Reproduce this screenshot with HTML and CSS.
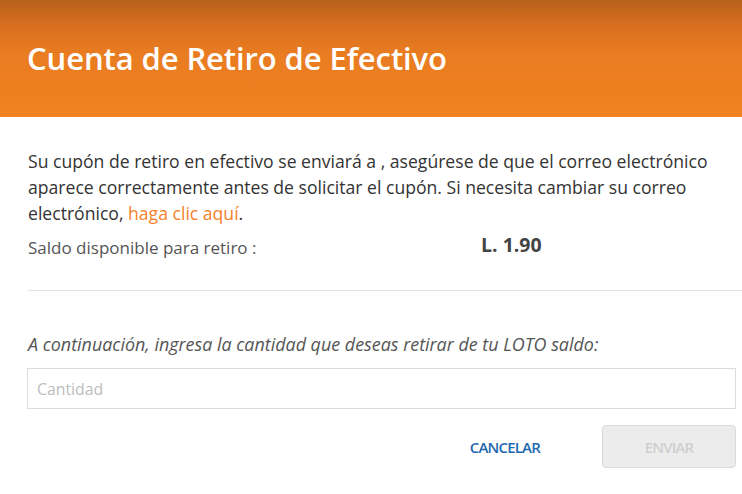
FILE: index.html
```html
<!DOCTYPE html>
<html lang="es">
<head>
<meta charset="utf-8">
<title>Cuenta de Retiro de Efectivo</title>
<link rel="stylesheet" href="styles.css">
</head>
<body>
<div class="modal">
  <header class="modal-header">
    <h1 class="modal-title">Cuenta de Retiro de Efectivo</h1>
  </header>
  <section class="modal-body">
    <p class="notice">Su cupón de retiro en efectivo se enviará a , asegúrese de que el correo electrónico aparece correctamente antes de solicitar el cupón. Si necesita cambiar su correo electrónico, <a class="link" href="#">haga clic aquí</a>.</p>
    <div class="balance-row">
      <span class="balance-label">Saldo disponible para retiro :</span>
      <span class="balance-value">L. 1.90</span>
    </div>
  </section>
  <hr class="divider">
  <section class="form">
    <p class="hint">A continuación, ingresa la cantidad que deseas retirar de tu LOTO saldo:</p>
    <input class="amount" type="text" placeholder="Cantidad">
    <div class="actions">
      <button class="btn-cancel" type="button">CANCELAR</button>
      <button class="btn-send" type="button" disabled>ENVIAR</button>
    </div>
  </section>
</div>
</body>
</html>
```
FILE: styles.css
```css
* { box-sizing: border-box; }
html, body { margin: 0; padding: 0; background: #fff; }
body { font-family: "Open Sans", "Noto Sans", sans-serif; color: #333; }

.modal { width: 742px; }

.modal-header {
  height: 117px;
  background: linear-gradient(180deg, #b6601b 0%, #d96f1f 22%, #e97c21 45%, #f28221 100%);
  display: flex;
  align-items: center;
  padding: 0 28px 0 27px;
}
.modal-title {
  margin: 0;
  margin-top: -1px;
  color: #fff;
  font-size: 31px;
  font-weight: 600;
  letter-spacing: -0.1px;
  line-height: 1;
}

.modal-body { padding: 31px 14px 0 28px; }
.notice {
  margin: 0;
  font-size: 17.6px;
  line-height: 26px;
  color: #333;
}
.link { color: #f5822a; text-decoration: none; }

.balance-row {
  display: flex;
  align-items: center;
  margin-top: 9px;
  height: 26px;
}
.balance-label {
  width: 453px;
  font-size: 17px;
  color: #555;
  line-height: 26px;
}
.balance-value {
  font-size: 19.5px;
  font-weight: 700;
  color: #444;
  line-height: 26px;
  position: relative;
  top: -3px;
}

.divider {
  margin: 29px 0 0 28px;
  border: 0;
  border-top: 1px solid #e3e3e3;
  height: 0;
}

.form { padding: 40px 6px 0 27px; }
.hint {
  margin: 0 0 0 1px;
  font-size: 17.9px;
  font-style: italic;
  color: #555;
  line-height: 26px;
}
.amount {
  display: block;
  width: 100%;
  height: 41px;
  margin-top: 11px;
  border: 1px solid #dcdcdc;
  padding: 0 9px;
  font-family: inherit;
  font-size: 15.8px;
  color: #333;
  outline: none;
}
.amount::placeholder { color: #bdbdbd; }

.actions {
  display: flex;
  justify-content: flex-end;
  align-items: center;
  gap: 62px;
  margin-top: 16px;
}
.btn-cancel {
  background: none;
  border: 0;
  padding: 0;
  font-family: inherit;
  font-size: 15px;
  font-weight: 600;
  letter-spacing: -0.8px;
  color: #1f68b0;
  cursor: pointer;
}
.btn-send {
  width: 134px;
  height: 43px;
  background: #ececec;
  border: 1px solid #dadada;
  border-radius: 4px;
  font-family: inherit;
  font-size: 15px;
  font-weight: 600;
  letter-spacing: -0.8px;
  color: #cfcfcf;
}
```
